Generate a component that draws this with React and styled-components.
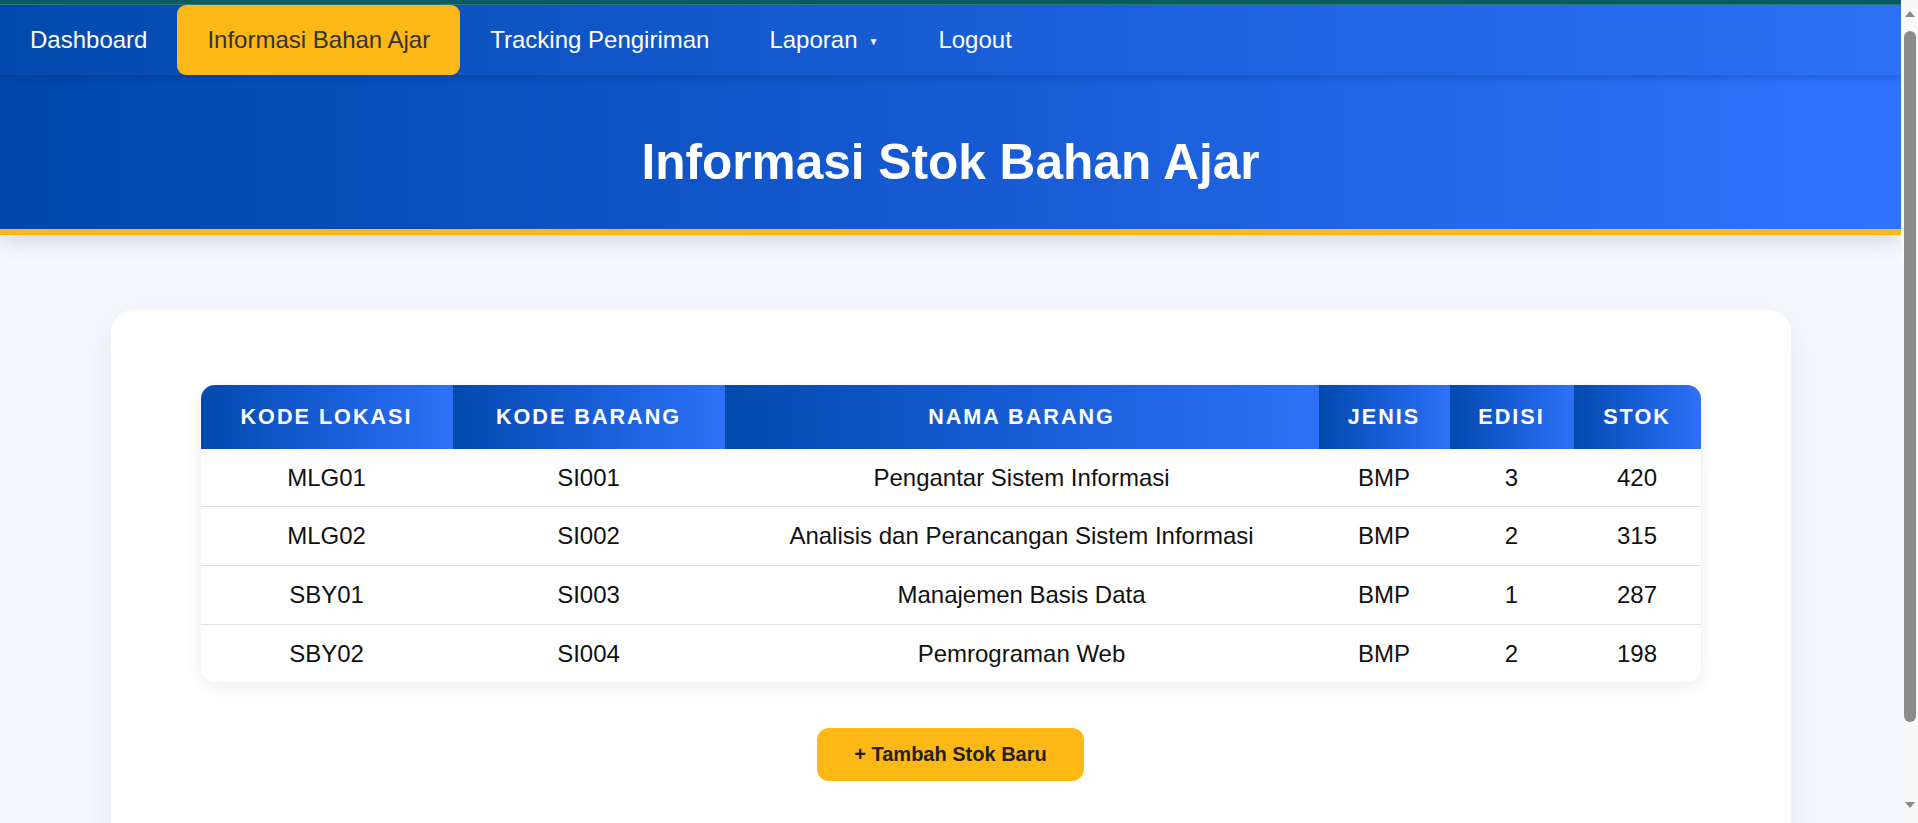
import React from "react";
import styled, { createGlobalStyle } from "styled-components";

const GlobalStyle = createGlobalStyle`
  html, body {
    margin: 0;
    padding: 0;
  }
  body {
    font-family: "Liberation Sans", Arial, sans-serif;
    background: #f5f8fc;
    color: #111;
    padding-right: 17px;
  }
  * { box-sizing: border-box; }
`;

const ScrollRail = styled.div`
  position: fixed;
  top: 0;
  right: 0;
  bottom: 0;
  width: 17px;
  background: #f9f9f9;
  display: flex;
  flex-direction: column;
  align-items: center;
  padding: 11px 0 15px;
  z-index: 10;
`;

const Arrow = styled.div`
  width: 0;
  height: 0;
  border-left: 5px solid transparent;
  border-right: 5px solid transparent;
  ${(p) =>
    p.$down
      ? "border-top: 6px solid #8b8b8b;"
      : "border-bottom: 6px solid #8b8b8b;"}
`;

const Thumb = styled.div`
  width: 12px;
  margin: 14px 0 0;
  height: 691px;
  background: #8b8b8b;
  border-radius: 6px;
`;

const RailSpacer = styled.div`
  flex: 1;
`;

const TopStrip = styled.div`
  height: 5px;
  background: #0e5b62;
  border-bottom: 1px solid #2b7b83;
`;

const NavBar = styled.nav`
  height: 70px;
  display: flex;
  align-items: stretch;
  background: linear-gradient(90deg, #0349ad 0%, #1a5fd9 55%, #2c70f6 100%);
  box-shadow: 0 3px 6px rgba(0, 30, 90, 0.25);
  position: relative;
  z-index: 2;
`;

const NavItem = styled.a`
  display: flex;
  align-items: center;
  padding: 0 30px;
  font-size: 24px;
  color: ${(p) => (p.$active ? "#333" : "#fff")};
  background: ${(p) => (p.$active ? "#fdb815" : "transparent")};
  border-radius: ${(p) => (p.$active ? "9px" : "0")};
  text-decoration: none;
  cursor: pointer;
`;

const Caret = styled.span`
  font-size: 10px;
  margin-left: 11px;
  margin-top: 2px;
`;

const Header = styled.header`
  background: linear-gradient(90deg, #0047ab 0%, #165ad2 50%, #2f74ff 100%);
  border-bottom: 6px solid #fdb815;
  padding: 59px 0 38px;
  text-align: center;
  box-shadow: 0 6px 22px rgba(0, 0, 0, 0.14);
  position: relative;
  z-index: 1;
`;

const Title = styled.h1`
  margin: 0;
  font-size: 49.6px;
  font-weight: 700;
  color: #fff;
  line-height: 1.15;
`;

const Main = styled.main`
  padding: 75px 0 60px;
`;

const Card = styled.section`
  max-width: 1680px;
  margin: 0 auto;
  background: #fff;
  border-radius: 22px;
  padding: 75px 90px 80px;
  box-shadow: 0 10px 40px rgba(20, 40, 90, 0.08);
  display: flex;
  flex-direction: column;
  align-items: center;
`;

const TableWrap = styled.div`
  width: 100%;
  border-radius: 14px;
  overflow: hidden;
  box-shadow: 0 4px 18px rgba(0, 0, 0, 0.08);
`;

const Table = styled.table`
  width: 100%;
  border-collapse: collapse;
  table-layout: fixed;
`;

const Th = styled.th`
  background: linear-gradient(90deg, #0349ad 0%, #1a5fd9 55%, #2d71f7 100%);
  color: #fff;
  font-size: 21.6px;
  font-weight: 700;
  letter-spacing: 2px;
  text-transform: uppercase;
  padding: 19.5px 0;
  text-align: center;
  line-height: 1.15;
`;

const Td = styled.td`
  font-size: 24px;
  color: #111;
  text-align: center;
  padding: 15px 0;
  line-height: 1.15;
  border-bottom: 1px solid #e2e2e2;
  tr:last-child > & {
    border-bottom: none;
  }
`;

const AddButton = styled.button`
  margin-top: 46px;
  background: #fdb815;
  color: #222;
  border: none;
  border-radius: 12px;
  padding: 15px 37px;
  font-family: inherit;
  font-size: 20px;
  font-weight: 700;
  line-height: 1.15;
  cursor: pointer;
`;

const columns = [
  { label: "Kode Lokasi", width: 252 },
  { label: "Kode Barang", width: 272 },
  { label: "Nama Barang", width: 594 },
  { label: "Jenis", width: 131 },
  { label: "Edisi", width: 124 },
  { label: "Stok", width: 127 },
];

const rows = [
  ["MLG01", "SI001", "Pengantar Sistem Informasi", "BMP", 3, 420],
  ["MLG02", "SI002", "Analisis dan Perancangan Sistem Informasi", "BMP", 2, 315],
  ["SBY01", "SI003", "Manajemen Basis Data", "BMP", 1, 287],
  ["SBY02", "SI004", "Pemrograman Web", "BMP", 2, 198],
];

export default function App() {
  return (
    <>
      <GlobalStyle />
      <ScrollRail>
        <Arrow />
        <Thumb />
        <RailSpacer />
        <Arrow $down />
      </ScrollRail>
      <TopStrip />
      <NavBar>
        <NavItem>Dashboard</NavItem>
        <NavItem $active>Informasi Bahan Ajar</NavItem>
        <NavItem>Tracking Pengiriman</NavItem>
        <NavItem>
          Laporan<Caret>▼</Caret>
        </NavItem>
        <NavItem>Logout</NavItem>
      </NavBar>
      <Header>
        <Title>Informasi Stok Bahan Ajar</Title>
      </Header>
      <Main>
        <Card>
          <TableWrap>
            <Table>
              <colgroup>
                {columns.map((c) => (
                  <col key={c.label} style={{ width: c.width }} />
                ))}
              </colgroup>
              <thead>
                <tr>
                  {columns.map((c) => (
                    <Th key={c.label}>{c.label}</Th>
                  ))}
                </tr>
              </thead>
              <tbody>
                {rows.map((r) => (
                  <tr key={r[0]}>
                    {r.map((v, i) => (
                      <Td key={i}>{v}</Td>
                    ))}
                  </tr>
                ))}
              </tbody>
            </Table>
          </TableWrap>
          <AddButton>+ Tambah Stok Baru</AddButton>
        </Card>
      </Main>
    </>
  );
}
